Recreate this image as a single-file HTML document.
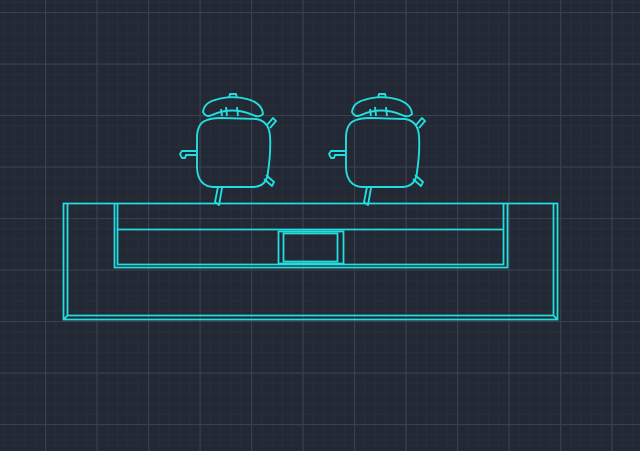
<!DOCTYPE html>
<html><head><style>
html,body{margin:0;padding:0;background:#222834;width:640px;height:451px;overflow:hidden}
</style></head><body>
<svg width="640" height="451" viewBox="0 0 640 451" xmlns="http://www.w3.org/2000/svg">
<defs>
<pattern id="minor" x="-6.5" y="1.7" width="10.3" height="10.3" patternUnits="userSpaceOnUse">
<path d="M0.5 0V10.3M0 0.5H10.3" stroke="#272e3a" stroke-width="1"/>
</pattern>
<pattern id="major" x="45" y="12" width="51.5" height="51.5" patternUnits="userSpaceOnUse">
<path d="M0.5 0V51.5M0 0.5H51.5" stroke="#384050" stroke-width="1.3"/>
</pattern>
<g id="chair" fill="none" stroke="#22dede" stroke-width="1.9" stroke-linejoin="round">
<path d="M207 120 Q197 123 197 138 L197 168 Q198 186 213 187 L254 187 Q267 186 268 172 Q271 152 270 136 Q269 121 256 119 L222 118 Q212 118 207 120Z"/>
<path d="M203 112 Q204 103 215 100 Q231 95 247 99 Q262 103 263 114 Q259 118 253 115 Q232 106 212 115 Q206 118 203 112Z"/>
<path d="M229 98 L230 94 L236 94 L237 98"/>
<path d="M221 109 L222 116 M226 107 L227 116 M237 107 L238 116"/>
<path d="M197 151 L182 151 L180 154 L182 158 L185 158 L186 155 L197 155"/>
<path d="M267 125 L273 118 L276 121 L270 128"/>
<path d="M266 175 L274 182 L272 186 L264 179"/>
<path d="M218 187 L215 202 L219 205 L222 188"/>
</g>
</defs>
<rect width="640" height="451" fill="url(#minor)"/>
<rect width="640" height="451" fill="url(#major)"/>
<use href="#chair"/>
<use href="#chair" x="149"/>
<g fill="none" stroke="#22dede" stroke-width="1.8">
<path d="M63.5 203.5H557.5V319.5H63.5Z"/>
<path d="M67.5 203.5V315.5H553.5V203.5"/>
<path d="M63.5 319.5L67.5 315.5M557.5 319.5L553.5 315.5"/>
<path d="M114.5 203.5V267.5H507.5V203.5"/>
<path d="M117.5 203.5V264.5H503.5V203.5"/>
<path d="M117.5 229.5H503.5"/>
<path d="M278.5 231.5H343.5V263.5H278.5Z"/>
<path d="M283.5 233.5H337.5V261.5H283.5Z"/>
</g>
</svg>
</body></html>
